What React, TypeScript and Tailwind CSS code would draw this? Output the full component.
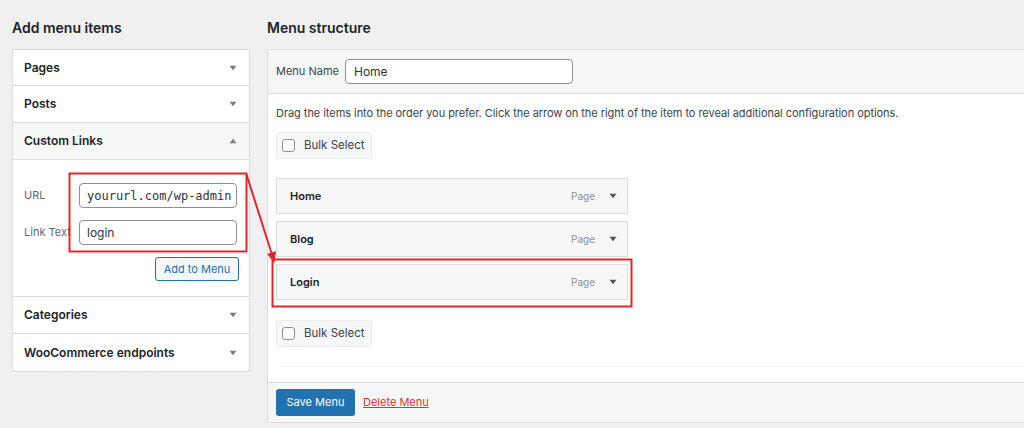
import React from "react";

const Down = () => (
  <svg width="8" height="6" viewBox="0 0 8 6" className="block">
    <path d="M0.5 0.8 L7.5 0.8 L4 5.2 Z" fill="#787c82" />
  </svg>
);
const Up = () => (
  <svg width="8" height="6" viewBox="0 0 8 6" className="block">
    <path d="M0.5 5.2 L7.5 5.2 L4 0.8 Z" fill="#787c82" />
  </svg>
);

const Row = ({ title, up, gray, last, first }: { title: string; up?: boolean; gray?: boolean; last?: boolean; first?: boolean }) => (
  <div
    className={`${first ? "h-[36px]" : "h-[37px]"} flex items-center justify-between pl-[11px] pr-[12px] ${last ? "" : "border-b border-[#dcdcde]"} ${gray ? "bg-[#f6f7f7]" : "bg-white"}`}
  >
    <span className="text-[12px] font-semibold text-[#1d2327]">{title}</span>
    {up ? <Up /> : <Down />}
  </div>
);

const Checkbox = () => (
  <span className="w-[13px] h-[13px] rounded-[3px] border border-[#8c8f94] bg-white block" />
);

const BulkSelect = () => (
  <div className="w-[96px] h-[27px] flex items-center gap-[9px] pl-[5px] bg-[#f6f7f7] border border-[#ececec] rounded-[3px]">
    <Checkbox />
    <span className="text-[11.5px] text-[#3c434a]">Bulk Select</span>
  </div>
);

const MenuItem = ({ label }: { label: string }) => (
  <div className="w-[352px] h-[36px] flex items-center justify-between pl-[13px] pr-[10px] bg-[#f6f7f7] border border-[#dcdcde]">
    <span className="text-[11px] font-semibold text-[#1d2327]">{label}</span>
    <div className="flex items-center gap-[14px]">
      <span className="text-[10px] text-[#8c8f94]">Page</span>
      <svg width="8" height="6" viewBox="0 0 8 6" className="block">
        <path d="M0.5 0.8 L7.5 0.8 L4 5.2 Z" fill="#50575e" />
      </svg>
    </div>
  </div>
);

export default function App() {
  return (
    <div
      className="relative w-[1024px] h-[428px] overflow-hidden bg-[#f0f0f1]"
      style={{ fontFamily: "Inter, 'Noto Sans', Arial, sans-serif" }}
    >
      <div className="flex pl-[12px] pt-[18px] gap-[17px]">
        {/* Left column */}
        <div className="w-[238px] shrink-0">
          <h2 className="h-[20px] leading-[20px] mb-[11px] text-[14px] font-semibold text-[#1d2327]">Add menu items</h2>
          <div className="border border-[#dcdcde] bg-white">
            <Row title="Pages" first />
            <Row title="Posts" />
            <Row title="Custom Links" up gray />
            <div className="border-b border-[#dcdcde] pt-[23px] pb-[15px] pl-[11px] pr-[10px]">
              <div className="flex items-center">
                <span className="w-[55px] text-[11px] text-[#646970]">URL</span>
                <div
                  className="w-[158px] h-[25px] border border-[#8c8f94] rounded-[4px] flex items-center px-[7px] text-[12px] text-[#2c3338] whitespace-nowrap overflow-hidden"
                  style={{ fontFamily: "'DejaVu Sans Mono', 'Liberation Mono', monospace" }}
                >
                  yoururl.com/wp-admin
                </div>
              </div>
              <div className="flex items-center mt-[12px]">
                <span className="w-[55px] text-[11px] text-[#646970] whitespace-nowrap">Link Text</span>
                <div className="w-[158px] h-[25px] border border-[#8c8f94] rounded-[4px] flex items-center px-[7px] text-[12px] text-[#2c3338]">
                  login
                </div>
              </div>
              <div className="flex justify-end mt-[12px]">
                <div className="w-[84px] h-[24px] flex items-center justify-center border border-[#2271b1] rounded-[3px] bg-[#f6f7f7] text-[11px] text-[#2271b1]">
                  Add to Menu
                </div>
              </div>
            </div>
            <Row title="Categories" />
            <Row title="WooCommerce endpoints" last />
          </div>
        </div>

        {/* Right column */}
        <div className="w-[760px] shrink-0">
          <h2 className="h-[20px] leading-[20px] mb-[11px] text-[14px] font-semibold text-[#1d2327]">Menu structure</h2>
          <div className="border border-[#dcdcde] bg-white">
            <div className="h-[44px] flex items-center gap-[6px] pl-[8px] bg-[#f6f7f7] border-b border-[#dcdcde]">
              <span className="text-[11px] text-[#3c434a]">Menu Name</span>
              <div className="w-[228px] h-[25px] border border-[#8c8f94] rounded-[4px] bg-white flex items-center px-[8px] text-[12px] text-[#2c3338]">
                Home
              </div>
            </div>
            <div className="pl-[8px] pt-[11px] pb-[15px]">
              <p className="h-[16px] leading-[16px] text-[11px] tracking-[-0.05px] text-[#3c434a]">
                Drag the items into the order you prefer. Click the arrow on the right of the item to reveal additional configuration options.
              </p>
              <div className="mt-[11px]">
                <BulkSelect />
              </div>
              <div className="mt-[19px] flex flex-col gap-[7px]">
                <MenuItem label="Home" />
                <MenuItem label="Blog" />
                <MenuItem label="Login" />
              </div>
              <div className="mt-[20px]">
                <BulkSelect />
              </div>
              <div className="mt-[19px] ml-[4px] h-[1px] bg-[#f0f0f1]" />
            </div>
            <div className="border-t border-[#dcdcde] bg-[#f6f7f7] h-[40px] flex items-center gap-[8px] pl-[8px]">
              <div className="w-[79px] h-[27px] rounded-[3px] bg-[#2271b1] flex items-center justify-center text-[11px] text-white">
                Save Menu
              </div>
              <span className="text-[11px] text-[#d63638] underline">Delete Menu</span>
            </div>
          </div>
        </div>
      </div>

      {/* Red annotations */}
      <svg className="absolute top-0 left-0 pointer-events-none" width="1024" height="428" viewBox="0 0 1024 428">
        <rect x="69.5" y="173.5" width="177" height="78" fill="none" stroke="#e3262b" strokeWidth="2" />
        <rect x="272.5" y="259.5" width="359" height="47" fill="none" stroke="#e3262b" strokeWidth="2" />
        <line x1="246.5" y1="174.5" x2="271.5" y2="253" stroke="#e3262b" strokeWidth="2" />
        <polygon points="276,251 267,254 274.5,263" fill="#e3262b" />
      </svg>
    </div>
  );
}
